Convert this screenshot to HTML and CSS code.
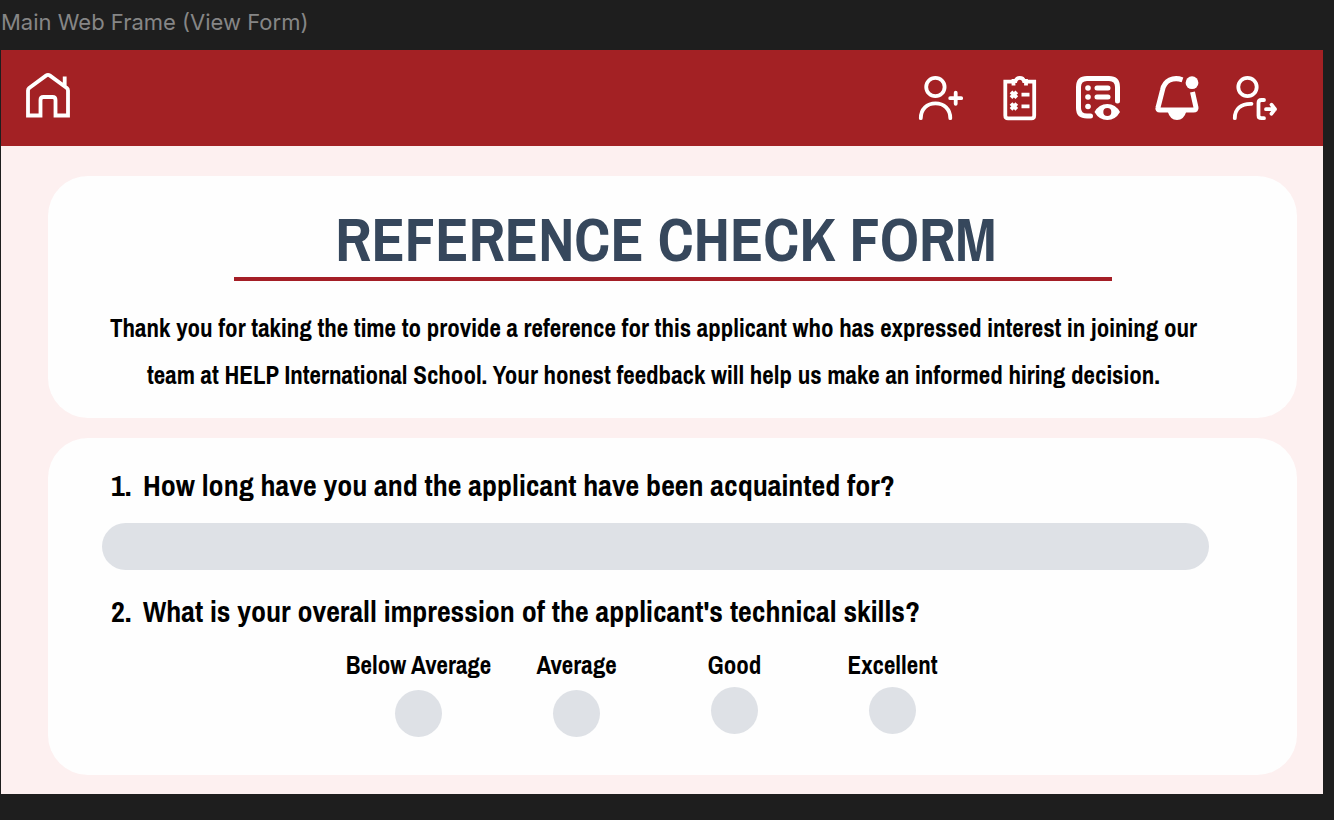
FILE: index.html
```
<!DOCTYPE html>
<html lang="en">
<head>
<meta charset="utf-8">
<title>Reference Check Form</title>
<meta name="viewport" content="width=device-width, initial-scale=1">
<link rel="stylesheet" href="styles.css">
</head>
<body>
<p class="frame-label">Main Web Frame (View Form)</p>
<div class="frame">
  <header class="topbar">
    <a class="icon-link" href="#home" aria-label="Home">
      <svg class="icon" viewBox="0 0 44 44"><path d="M2 42.500V17.500Q2 16 3.200 15L20 2.600Q22 1.200 24 2.600L40.800 15Q42 16 42 17.500V42.500H29.500V27Q29.500 24 26.500 24H17.500Q14.500 24 14.500 27V42.500ZM38.700 3.500V14"/></svg>
    </a>
    <nav class="actions" aria-label="Main">
      <a class="icon-link" href="#add-user" aria-label="Add applicant">
        <svg class="icon round" viewBox="0 0 44 44"><circle cx="16.400" cy="11" r="9.200"/><path d="M1.800 42.200C1.800 33 8 27.300 16.500 27.300S31.300 33 31.300 42.200M36.700 16.700V27.800M31.200 22.200H42.200"/></svg>
      </a>
      <a class="icon-link" href="#checks" aria-label="Checklist">
        <svg class="icon" viewBox="0 0 44 44"><path d="M15.500 5.700H7.300V39.500Q7.300 42.300 10 42.300H33.500Q36.200 42.300 36.200 39.500V5.700H28M15.500 9.500V5H17.500Q18.500 1.900 21.800 1.900T26 5H28V9.500M13 15.800L18.800 21.600M18.800 15.800L13 21.600M13 27.500L18.800 33.300M18.800 27.500L13 33.300M23.500 18.700H31.500M23.500 30.400H31.500"/></svg>
      </a>
      <a class="icon-link" href="#forms" aria-label="View forms">
        <svg class="icon thick" viewBox="0 0 44 44"><path d="M14.500 40H11Q2.500 40 2.500 32V11Q2.500 2.500 11 2.500H33Q41.500 2.500 41.500 11V25M21 12H32M21 21H32"/><g class="solid"><circle cx="12" cy="12" r="2.800"/><circle cx="12" cy="21" r="2.800"/><circle cx="12" cy="30.500" r="2.800"/><path fill-rule="evenodd" d="M18.500 36Q23 28 31.300 28T44 36Q39.500 44 31.300 44T18.500 36ZM31.300 32A4 4 0 1 0 31.300 40A4 4 0 1 0 31.300 32Z"/></g></svg>
      </a>
      <a class="icon-link" href="#alerts" aria-label="Notifications">
        <svg class="icon bell" viewBox="0 0 44 44"><path d="M27.500 3.800C18 .5 9.500 4.500 7.500 14L3 31.500Q2.200 34 5 34H38.500Q41.500 34 41 31.500L37.500 16"/><g class="solid"><circle cx="37" cy="6.700" r="6.400"/><path d="M12.500 35H31.500Q29 44 22 44T12.500 35Z"/></g></svg>
      </a>
      <a class="icon-link" href="#sign-out" aria-label="Sign out">
        <svg class="icon round" viewBox="0 0 44 44"><circle cx="14.500" cy="11" r="9.200"/><path d="M1.800 42.200C1.800 33 8 27.500 18.500 27.800M31 24H28.500Q25.500 24 25.500 27V39.500Q25.500 42.200 28.500 42.200H31M33 33.200H42M38.500 28.700L42 33.200L38.500 37.700"/></svg>
      </a>
    </nav>
  </header>
  <main class="content">
    <section class="card intro">
      <h1 class="title">REFERENCE CHECK FORM</h1>
      <p class="lead">Thank you for taking the time to provide a reference for this applicant who has expressed interest in joining our team at HELP International School. Your honest feedback will help us make an informed hiring decision.</p>
    </section>
    <form class="card questions">
      <label class="question" for="acquainted"><span class="number">1.</span>How long have you and the applicant have been acquainted for?</label>
      <input class="answer" id="acquainted" type="text">
      <fieldset class="rating">
        <legend class="question"><span class="number">2.</span>What is your overall impression of the applicant's technical skills?</legend>
        <div class="options">
          <label class="option">Below Average<input type="radio" name="skills"></label>
          <label class="option">Average<input type="radio" name="skills"></label>
          <label class="option close">Good<input type="radio" name="skills"></label>
          <label class="option close">Excellent<input type="radio" name="skills"></label>
        </div>
      </fieldset>
    </form>
  </main>
</div>
</body>
</html>
```
FILE: styles.css
```
* { box-sizing: border-box; }
body {
  margin: 0;
  background: #1e1e1e;
  color: #000;
  font-family: "Archivo Narrow", "Liberation Sans Narrow", "Liberation Sans", sans-serif;
  font-weight: 700;
}
.frame-label {
  margin: 0;
  padding: 6px 1px 12px;
  font: 400 22px/32px Inter, sans-serif;
  color: #868686;
}
.frame { margin: 0 11px 26px 1px; background: #fdf0f0; }
.topbar {
  display: flex;
  justify-content: space-between;
  padding: 23px 46px 26px 25px;
  background: #a32124;
}
.icon-link { display: block; height: 44px; }
.icon {
  display: block;
  width: 44px;
  height: 44px;
  overflow: visible;
  fill: none;
  stroke: #fff;
  stroke-width: 3.8;
}
.round { stroke-linecap: round; stroke-linejoin: round; }
.thick { stroke-width: 5; stroke-linecap: round; }
.bell { stroke-width: 5; }
.solid { fill: #fff; stroke: none; }
.actions { display: flex; justify-content: space-between; width: 358px; padding-top: 3px; }
.content { display: grid; gap: 20px; padding: 30px 26px 19px 47px; }
.card { border-radius: 40px; background: #fefefe; }
.intro { padding: 28px 88px 19px 54px; }
.title {
  margin: 0 97px 24px 132px;
  padding: 0 14px 3px 0;
  border-bottom: 4px solid #a41e26;
  color: #36475c;
  font-size: 61px;
  line-height: 70px;
  text-align: center;
  white-space: nowrap;
}
.lead { margin: 0; padding-right: 4px; font-size: 25px; line-height: 47px; text-align: center; }
.questions { padding: 27px 88px 38px 54px; }
.question { display: flex; padding-left: 9px; font-size: 30px; line-height: 40px; }
.number { width: 32px; }
.answer {
  display: block;
  width: 100%;
  height: 47px;
  margin: 18px 0 21px;
  padding: 0 24px;
  border: 0;
  border-radius: 24px;
  background: #dee1e6;
  font: inherit;
  font-size: 25px;
}
.rating { min-width: 0; margin: 0; padding: 0; border: 0; }
.options {
  display: grid;
  grid-template-columns: repeat(4, 158px);
  justify-content: center;
  padding-top: 18px;
}
.option {
  display: flex;
  flex-direction: column;
  align-items: center;
  gap: 9px;
  font-size: 25px;
  line-height: 32px;
  white-space: nowrap;
}
.close { gap: 6px; }
.option input {
  width: 47px;
  height: 47px;
  margin: 0;
  border-radius: 50%;
  appearance: none;
  background: #dee1e6;
}
.option input:checked { border: 12px solid #a32124; }
```
